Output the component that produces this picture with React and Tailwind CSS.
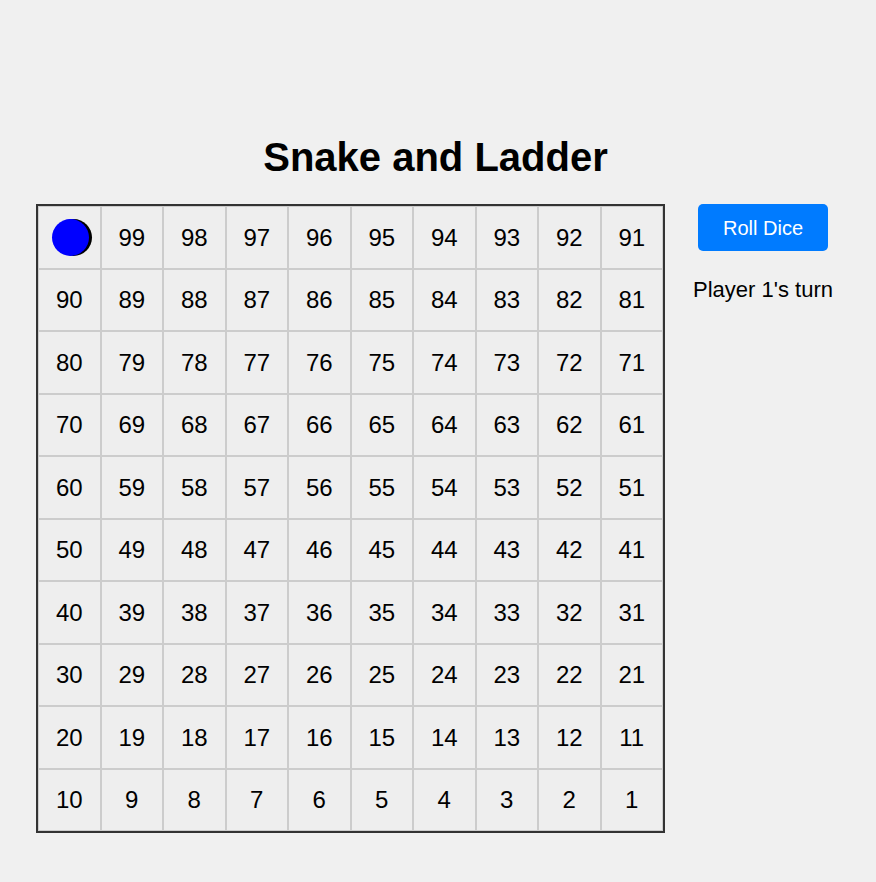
import React from "react";

// board rows, top row first: 100..91, then 90..81 etc (numbers run right-to-left in every row)
function buildRows() {
  const rows = [];
  for (let r = 9; r >= 0; r--) {
    const row = [];
    for (let c = 10; c >= 1; c--) row.push(r * 10 + c);
    rows.push(row);
  }
  return rows;
}

export default function App() {
  const rows = buildRows();

  return (
    <div
      className="min-h-screen w-full bg-[#f0f0f0] text-black"
      style={{ fontFamily: '"Liberation Sans", Arial, sans-serif' }}
    >
      <div className="ml-[36px] w-[799px] pt-[134px]">
        <h1 className="text-center text-[40px] font-bold leading-[46px] mb-6">Snake and Ladder</h1>

        <div className="flex items-start">
          {/* board */}
          <div className="grid w-[629px] grid-cols-10 border-2 border-[#333]">
            {rows.flat().map((n) => (
              <div
                key={n}
                className="relative flex h-[62.5px] items-center justify-center border border-[#ccc] bg-[#eee] pt-[1px] text-[24px] leading-none"
              >
                {n === 100 ? (
                  <>
                    <span className="absolute left-[16px] top-[12px] h-[37px] w-[37px] rounded-full bg-black" />
                    <span className="absolute left-[13px] top-[12px] h-[37px] w-[37px] rounded-full bg-[#0000ff]" />
                  </>
                ) : (
                  n
                )}
              </div>
            ))}
          </div>

          {/* controls */}
          <div className="ml-[26px] flex w-[144px] flex-col items-center">
            <button className="h-[47px] w-[130px] rounded-[5px] bg-[#007bff] text-[20px] text-white">
              Roll Dice
            </button>
            <div className="mt-[26px] whitespace-nowrap text-[22px] leading-[26px]">Player 1's turn</div>
          </div>
        </div>
      </div>
    </div>
  );
}
